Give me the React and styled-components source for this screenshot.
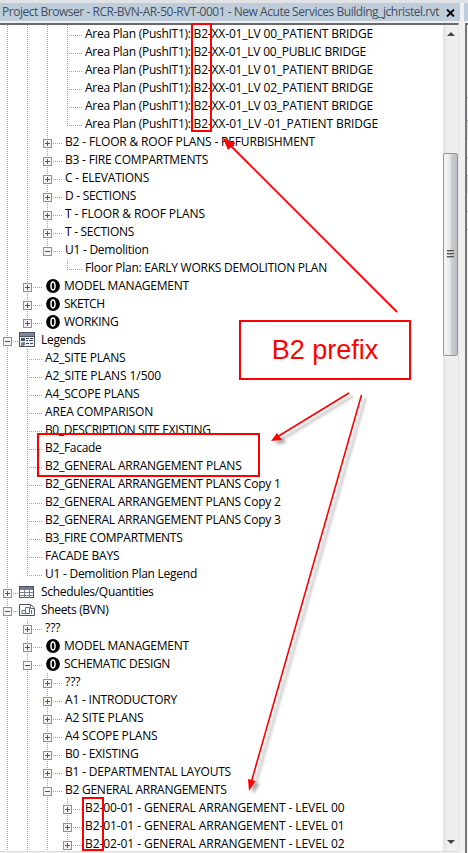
import React, { useLayoutEffect, useRef, useState } from "react";
import styled, { createGlobalStyle, css } from "styled-components";

const Global = createGlobalStyle`
  * { box-sizing: border-box; }
  body { margin: 0; background: #f0f0f0; overflow: hidden; }
`;

const dotsDown = "repeating-linear-gradient(180deg, #a0a0a0 0 1px, transparent 1px 2px)";
const dotsAcross = "repeating-linear-gradient(90deg, #a0a0a0 0 1px, transparent 1px 2px)";

const Window = styled.div`
  position: relative;
  width: 468px;
  height: 853px;
  display: flex;
  overflow: hidden;
  background: #f0f0f0;
  border-top: 3px solid #e1e2e5;
  font-family: "Open Sans", "Noto Sans", sans-serif;
  font-size: 12px;
  color: #000;
`;

const Panel = styled.section`
  width: 460px;
  display: flex;
  flex-direction: column;
`;

const TitleBar = styled.header`
  height: 18px;
  display: flex;
  align-items: center;
  justify-content: space-between;
  padding: 0 5px 0 2px;
  background: #bfcddb;
  color: #435061;
  svg { display: block; margin-top: 1px; }
`;

const Body = styled.div`
  width: 459px;
  height: 829px;
  margin-top: 2px;
  display: flex;
  border-top: 2px solid #69696b;
  border-right: 1px solid #e3e3e3;
  border-bottom: 1px solid #dcdcdc;
`;

const Tree = styled.div`
  flex: 1;
  background: #fff;
  overflow: hidden;
`;

const Row = styled.div`
  height: 18px;
  margin-left: -3px;
  display: flex;
  align-items: center;
`;

const Guide = styled.span`
  flex: none;
  width: 20px;
  height: 18px;
  ${(p) => p.$on && css`background: ${dotsDown} 10px 0 / 1px 100% no-repeat;`}
`;

const Branch = styled.span`
  flex: none;
  width: ${(p) => (p.$root ? 22 : 28)}px;
  height: 18px;
  padding: 6px;
  background:
    ${dotsDown} 10px 0 / 1px ${(p) => (p.$last ? "10px" : "100%")} no-repeat,
    ${dotsAcross} 10px 10px / ${(p) => (p.$root ? 12 : 15)}px 1px no-repeat;
  svg { display: block; }
`;

const Label = styled.span`
  flex: none;
  white-space: pre;
  line-height: 14px;
`;

const IconSlot = styled.span`
  flex: none;
  width: ${(p) => (p.$wide ? 22 : 19)}px;
  padding-left: ${(p) => (p.$wide ? 0 : 1)}px;
  svg { display: block; }
`;

const ScrollBar = styled.div`
  width: 15px;
  display: flex;
  flex-direction: column;
  align-items: center;
  background: linear-gradient(90deg, #e3e3e3, #eeeeee 30%, #f0f0f0);
  svg { display: block; }
`;

const ScrollButton = styled.div`
  height: 17px;
  padding-top: ${(p) => (p.$down ? 6 : 7)}px;
`;

const Track = styled.div`
  height: ${(p) => p.$size}px;
  flex: ${(p) => (p.$size ? "none" : 1)};
`;

const Thumb = styled.div`
  width: 15px;
  height: 203px;
  display: flex;
  align-items: center;
  justify-content: center;
  border: 1px solid #979797;
  border-radius: 2px;
  background: linear-gradient(90deg, #f5f5f5, #e9e9eb 45%, #d0d1d4 55%, #bcbdc0);
`;

const Neighbour = styled.aside`
  flex: 1;
  margin-left: 4px;
  display: flex;
  flex-direction: column;
`;

const NeighbourTitle = styled.div`
  height: 18px;
  background: #bfcddb;
`;

const NeighbourBody = styled.div`
  margin: 2px 0 0 1px;
  flex: 1;
  border-top: 2px solid #69696b;
  border-left: 2px solid #77777a;
  background: #f1f1f1;
`;

const Block = styled.div`
  height: ${(p) => p.$h}px;
  background: ${(p) => p.$fill};
  border-bottom: ${(p) => (p.$line ? "1px solid #a8a8a8" : "none")};
`;

const Mark = styled.div`
  position: absolute;
  left: ${(p) => p.$x}px;
  top: ${(p) => p.$y - 3}px;
  width: ${(p) => p.$w}px;
  height: ${(p) => p.$h}px;
  border: 2px solid #ff0000;
`;

const Callout = styled(Mark)`
  display: flex;
  align-items: center;
  justify-content: center;
  background: #fff;
  color: #ff0000;
  font: 27px/1 "Liberation Sans", sans-serif;
`;

const Arrows = styled.svg`
  position: absolute;
  left: 0;
  top: -3px;
`;

/* Spreads the letters so that the text takes up the given width. */
function FitText({ width, children }) {
  const ref = useRef(null);
  const [spacing, setSpacing] = useState(0);
  useLayoutEffect(() => {
    const fit = () => {
      const el = ref.current;
      if (!el) return;
      el.style.letterSpacing = "0px";
      const next = (width - el.getBoundingClientRect().width) / children.length;
      el.style.letterSpacing = `${next}px`;
      setSpacing(next);
    };
    fit();
    document.fonts?.ready.then(fit);
  }, [width, children]);
  return <Label ref={ref} style={{ letterSpacing: spacing }}>{children}</Label>;
}

function Toggle({ open }) {
  return (
    <svg width="9" height="9" shapeRendering="crispEdges">
      <rect x=".5" y=".5" width="8" height="8" fill="#f4f4f4" stroke="#919191" />
      <path d={open ? "M2 4.5H7" : "M2 4.5H7M4.5 2V7"} stroke="#3b5797" />
    </svg>
  );
}

function ZeroIcon() {
  return (
    <svg width="14" height="14">
      <circle cx="7" cy="7" r="6.9" fill="#000" />
      <ellipse cx="7" cy="7" rx="2" ry="3.9" fill="none" stroke="#fff" strokeWidth="1.5" />
    </svg>
  );
}

function LegendIcon() {
  return (
    <svg width="16" height="16" shapeRendering="crispEdges">
      <rect x=".5" y=".5" width="15" height="14" fill="#eef0f3" stroke="#4b5361" />
      <path d="M1 2.5H15" stroke="#7f8896" strokeWidth="3" />
      <path d="M1 4.5H15" stroke="#4b5361" />
      <rect x="2" y="6" width="4" height="3" fill="#4b5361" />
      <path d="M7 6.5h3M11 6.5h3M7 8.5h2M10 8.5h4M7 11.5h3M11 11.5h3" stroke="#3f4755" />
      <circle cx="4" cy="12" r="2" fill="#7b828e" />
    </svg>
  );
}

function ScheduleIcon() {
  return (
    <svg width="16" height="14" shapeRendering="crispEdges">
      <rect x=".5" y="1.5" width="14" height="11" fill="#fff" stroke="#4b5361" />
      <path d="M1 3H14" stroke="#737b89" strokeWidth="2" />
      <path d="M1 4.5H14M1 7.5H14M1 10.5H14M5.5 4V13M10.5 4V13" stroke="#7a8290" />
    </svg>
  );
}

function SheetIcon() {
  return (
    <svg width="16" height="14">
      <path d="M.5 1.5H11.5L15.5 5V12.5H.5Z" fill="#fff" stroke="#4b5361" />
      <path d="M11.5 1.500V5.500H15.500M3 10.500V7.500H6.500V4.500H10.500V10.500H2.500M6.500 7.500V10.500M12.500 7V11" fill="none" stroke="#626b79" />
    </svg>
  );
}

const icons = { zero: ZeroIcon, legend: LegendIcon, schedule: ScheduleIcon, sheet: SheetIcon };

/* [guides before the branch, text, right edge, toggle, icon, last child] */
const rows = [
  ["111", "Area Plan (PushIT1): |B2-XX-01_LV 00_PATIENT BRIDGE", 373],
  ["111", "Area Plan (PushIT1): |B2-XX-01_LV 00_PUBLIC BRIDGE", 366],
  ["111", "Area Plan (PushIT1): |B2-XX-01_LV 01_PATIENT BRIDGE", 373],
  ["111", "Area Plan (PushIT1): |B2-XX-01_LV 02_PATIENT BRIDGE", 373],
  ["111", "Area Plan (PushIT1): |B2-XX-01_LV 03_PATIENT BRIDGE", 373],
  ["111", "Area Plan (PushIT1): |B2-XX-01_LV -01_PATIENT BRIDGE", 378, "", "", true],
  ["11", "B2 - FLOOR & ROOF PLANS - REFURBISHMENT", 315, "+"],
  ["11", "B3 - FIRE COMPARTMENTS", 208, "+"],
  ["11", "C - ELEVATIONS", 149, "+"],
  ["11", "D - SECTIONS", 136, "+"],
  ["11", "T - FLOOR & ROOF PLANS", 205, "+"],
  ["11", "T - SECTIONS", 134, "+"],
  ["11", "U1 - Demolition", 148.5, "-", "", true],
  ["110", "Floor Plan: EARLY WORKS DEMOLITION PLAN", 327, "", "", true],
  ["1", "MODEL MANAGEMENT", 189, "+", "zero"],
  ["1", "SKETCH", 104.5, "+", "zero"],
  ["1", "WORKING", 118.5, "+", "zero", true],
  ["", "Legends", 85.5, "-", "legend"],
  ["1", "A2_SITE PLANS", 125.5],
  ["1", "A2_SITE PLANS 1/500", 161],
  ["1", "A4_SCOPE PLANS", 139.5],
  ["1", "AREA COMPARISON", 153],
  ["1", "B0_DESCRIPTION SITE EXISTING", 210.5],
  ["1", "B2_Facade", 101.5],
  ["1", "B2_GENERAL ARRANGEMENT PLANS", 241.5],
  ["1", "B2_GENERAL ARRANGEMENT PLANS Copy 1", 280.5],
  ["1", "B2_GENERAL ARRANGEMENT PLANS Copy 2", 280.5],
  ["1", "B2_GENERAL ARRANGEMENT PLANS Copy 3", 280.5],
  ["1", "B3_FIRE COMPARTMENTS", 182.5],
  ["1", "FACADE BAYS", 119.5],
  ["1", "U1 - Demolition Plan Legend", 197, "", "", true],
  ["", "Schedules/Quantities", 153.5, "+", "schedule"],
  ["", "Sheets (BVN)", 108.5, "-", "sheet"],
  ["1", "???", 60.5, "+"],
  ["1", "MODEL MANAGEMENT", 189, "+", "zero"],
  ["1", "SCHEMATIC DESIGN", 170, "-", "zero"],
  ["11", "???", 80.5, "+"],
  ["11", "A1 - INTRODUCTORY", 177, "+"],
  ["11", "A2 SITE PLANS", 143.5, "+"],
  ["11", "A4 SCOPE PLANS", 157.5, "+"],
  ["11", "B0 - EXISTING", 138.5, "+"],
  ["11", "B1 - DEPARTMENTAL LAYOUTS", 231, "+"],
  ["11", "B2 GENERAL ARRANGEMENTS", 226.5, "-"],
  ["111", "B2-00-01 - GENERAL ARRANGEMENT - LEVEL 00", 344.5, "+"],
  ["111", "B2-01-01 - GENERAL ARRANGEMENT - LEVEL 01", 344.5, "+"],
  ["111", "B2-02-01 - GENERAL ARRANGEMENT - LEVEL 02", 344.5, "+"],
];

const VIEW_TYPE_WIDTH = 108.5;

function TreeRow({ item }) {
  const [guides, text, right, toggle, icon, last] = item;
  const Icon = icons[icon];
  const root = guides === "";
  const start = root ? 41 : 25 + guides.length * 20 + (icon ? 19 : 0);
  const [first, second] = text.split("|");
  return (
    <Row>
      {[...guides].map((g, i) => <Guide key={i} $on={g === "1"} />)}
      <Branch $root={root} $last={last}>{toggle && <Toggle open={toggle === "-"} />}</Branch>
      {Icon && <IconSlot $wide={root}><Icon /></IconSlot>}
      <FitText width={second ? VIEW_TYPE_WIDTH : right - start}>{first}</FitText>
      {second && <FitText width={right - start - VIEW_TYPE_WIDTH}>{second}</FitText>}
    </Row>
  );
}

const arrows = [
  { line: "M397 312L229 144", head: "M223 138L235.500 143L228 150Z", width: 1.8 },
  { line: "M349 393L277 437", head: "M271 441L277 433L282 440Z", width: 1.6, shadow: true },
  { line: "M361.500 395L251 783", head: "M249 791L248 779L255.500 781Z", width: 1.6, shadow: true },
];

export default function App() {
  return (
    <>
      <Global />
      <Window>
        <Panel>
          <TitleBar>
            <FitText width={437}>Project Browser - RCR-BVN-AR-50-RVT-0001 - New Acute Services Building_jchristel.rvt</FitText>
            <svg width="9" height="8"><path d="M1 .5L8 7.500M8 .5L1 7.500" stroke="#000" strokeWidth="1.800" /></svg>
          </TitleBar>
          <Body>
            <Tree>{rows.map((item, i) => <TreeRow key={i} item={item} />)}</Tree>
            <ScrollBar>
              <ScrollButton><svg width="8" height="4"><path d="M0 4L4 0L8 4Z" fill="#444" /></svg></ScrollButton>
              <Track $size={111} />
              <Thumb>
                <svg width="7" height="9" shapeRendering="crispEdges">
                  <path d="M0 .5H7M0 3.500H7M0 6.500H7" stroke="#555" />
                  <path d="M0 1.500H7M0 4.500H7M0 7.500H7" stroke="#aaa" />
                </svg>
              </Thumb>
              <Track />
              <ScrollButton $down><svg width="8" height="4"><path d="M0 0L4 4L8 0Z" fill="#444" /></svg></ScrollButton>
            </ScrollBar>
          </Body>
        </Panel>
        <Neighbour>
          <NeighbourTitle />
          <NeighbourBody>
            <Block $h={73} $fill="#f2f2f2" $line />
            <Block $h={23} $fill="#f0f0f0" $line />
            <Block $h={19} $fill="#e1e1dd" />
            <Block $h={18} $fill="#f4f4f4" $line />
            <Block $h={18} $fill="#f4f4f4" $line />
            <Block $h={18} $fill="#dddddd" />
            <Block $h={18} $fill="#f4f4f4" $line />
            <Block $h={18} $fill="#f4f4f4" $line />
          </NeighbourBody>
        </Neighbour>
        <Mark $x={191} $y={23} $w={21} $h={109} />
        <Mark $x={37} $y={433} $w={223} $h={44} />
        <Mark $x={82} $y={797} $w={22} $h={54} />
        <Callout $x={239} $y={320} $w={172} $h={60}>B2 prefix</Callout>
        <Arrows width="468" height="853">
          <defs>
            <filter id="shadow" x="-20%" y="-20%" width="140%" height="140%">
              <feDropShadow dx="4" dy="3" stdDeviation="1.500" floodColor="#000" floodOpacity=".35" />
            </filter>
          </defs>
          {arrows.map((a) => (
            <g key={a.line} filter={a.shadow ? "url(#shadow)" : undefined}>
              <path d={a.line} stroke="#ff0000" strokeWidth={a.width} />
              <path d={a.head} fill="#ff0000" />
            </g>
          ))}
        </Arrows>
      </Window>
    </>
  );
}
